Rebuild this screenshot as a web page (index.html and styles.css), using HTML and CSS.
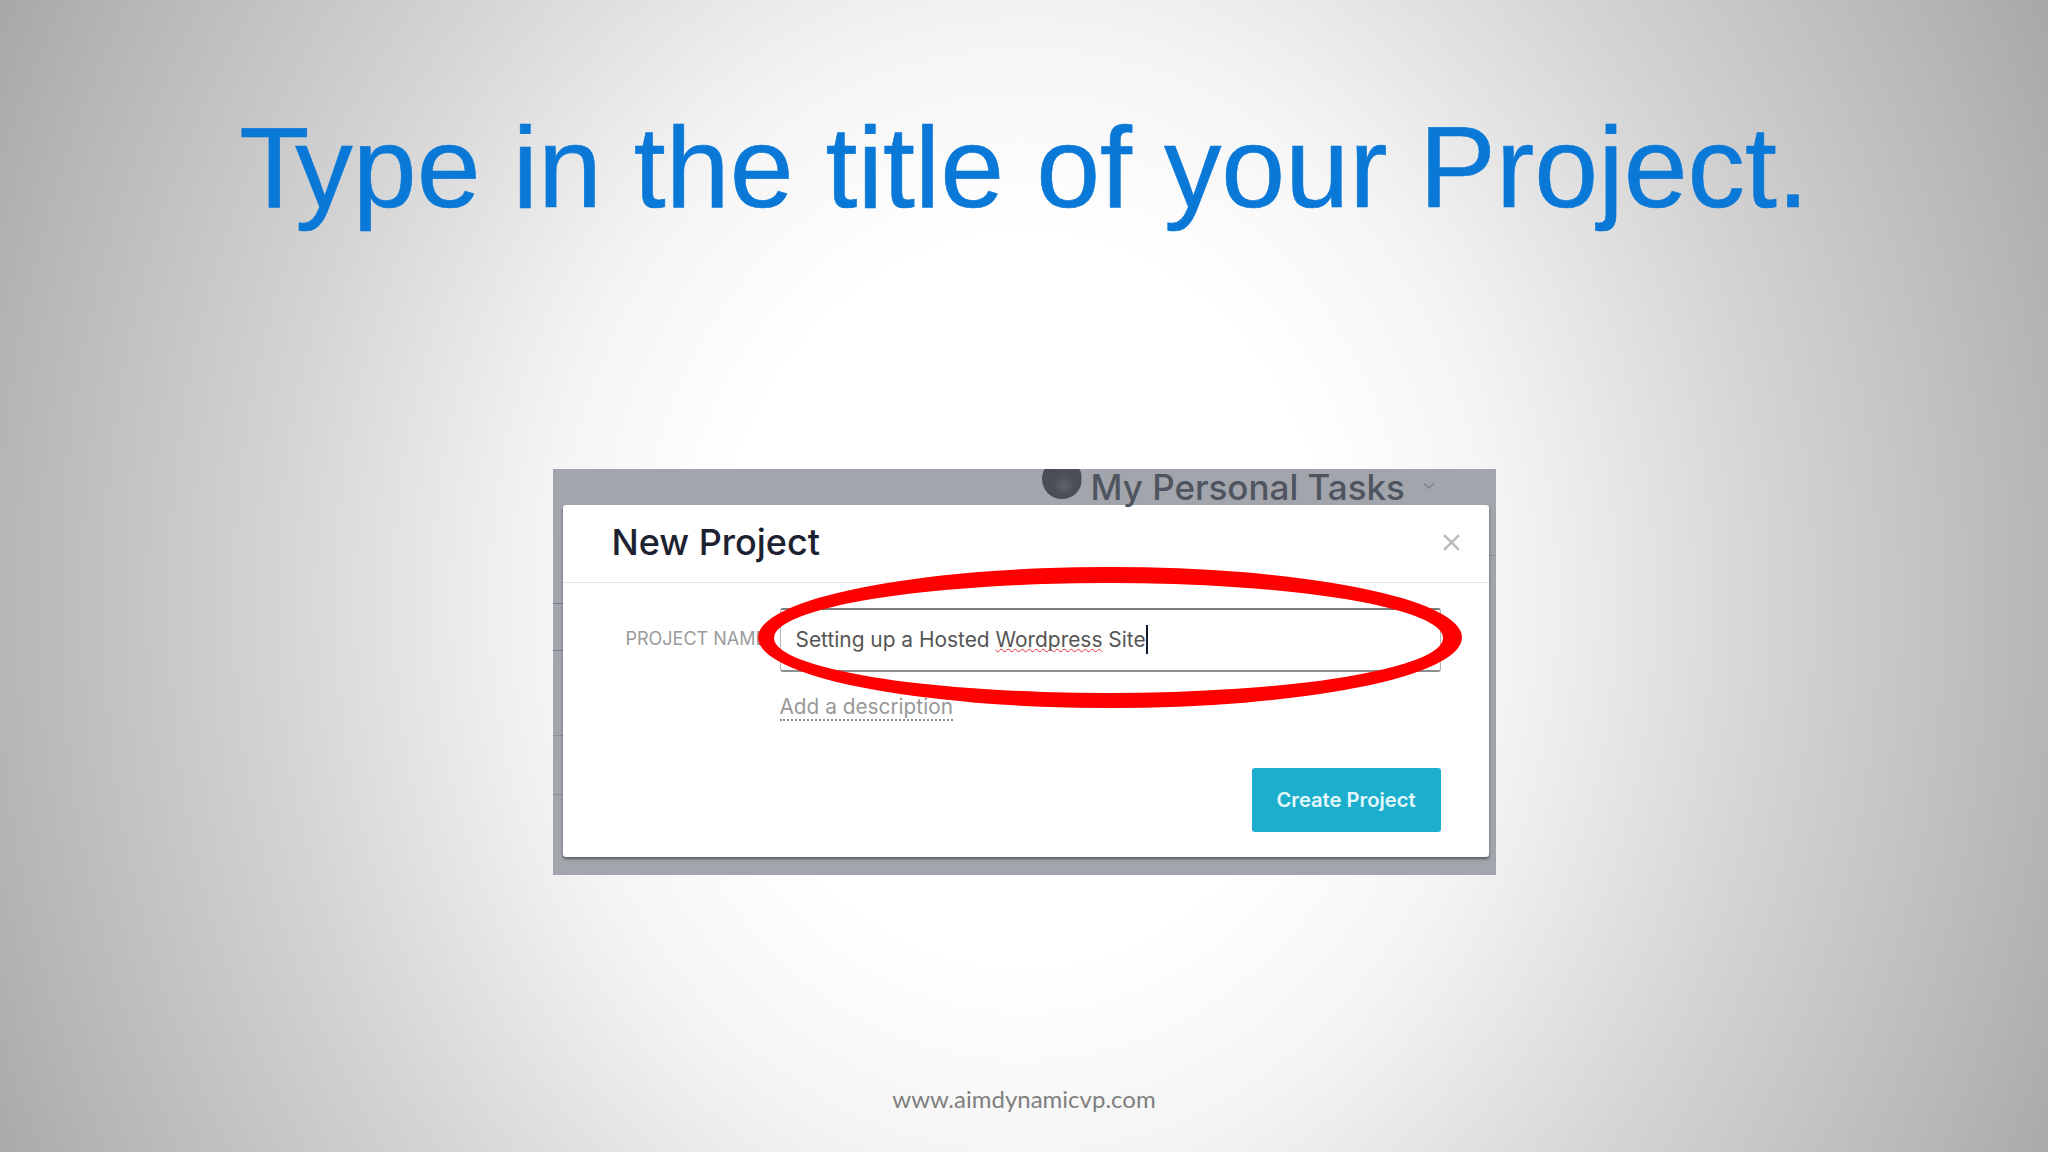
FILE: index.html
```html
<!DOCTYPE html>
<html lang="en">
<head>
    <meta charset="UTF-8">
    <title>Type in the title of your Project.</title>
    <link rel="stylesheet" href="styles.css">
</head>
<body>
    <main class="slide">
        <h1 class="slide-title"><span class="kern-t">T</span>ype in the title of your Project.</h1>

        <div class="capture">
            <div class="capture-top">
                <span class="avatar"></span>
                <span class="workspace">My Personal Tasks</span>
                <svg class="chevron" viewBox="0 0 12 8" width="12" height="8">
                    <path d="M1 1.5 L6 6 L11 1.5" fill="none" stroke="#7d8189" stroke-width="1.4"/>
                </svg>
            </div>

            <div class="dialog">
                <div class="dialog-head">
                    <h2>New Project</h2>
                    <svg class="close" viewBox="0 0 16 16" width="17" height="17">
                        <path d="M1 1 L15 15 M15 1 L1 15" fill="none" stroke="#b9b9b9" stroke-width="2.2"/>
                    </svg>
                </div>
                <div class="dialog-body">
                    <div class="field">
                        <label class="field-label">PROJECT NAME</label>
                        <div class="field-input">
                            <span>Setting up a Hosted <span class="misspelt">Wordpress</span> Site</span><span class="caret"></span>
                        </div>
                    </div>
                    <a class="add-description" href="#">Add a description</a>
                    <div class="dialog-actions">
                        <a class="btn" href="#">Create Project</a>
                    </div>
                </div>
            </div>

            <!-- red marker round the input -->
            <svg class="marker" viewBox="0 0 704 141" width="704" height="141">
                <path fill="#fe0000" fill-rule="evenodd" d="M0 70.5 A352 70.5 0 1 0 704 70.5 A352 70.5 0 1 0 0 70.5 Z M16 71 A334.5 55 0 1 1 685 71 A334.5 55 0 1 1 16 71 Z"/>
            </svg>
        </div>

        <footer class="slide-footer">www.aimdynamicvp.com</footer>
    </main>
</body>
</html>
```

FILE: styles.css
```css
* {
    margin: 0;
    padding: 0;
    box-sizing: border-box;
}

body {
    width: 2048px;
    height: 1152px;
    overflow: hidden;
    font-family: Inter, 'Liberation Sans', sans-serif;
}

.slide {
    width: 2048px;
    height: 1152px;
    display: flex;
    flex-direction: column;
    align-items: center;
    background: radial-gradient(ellipse 1100px 1300px at 50% 600px, #fff 0%, #fff 28%, #f5f5f5 43%, #efefef 48%, #d4d4d4 68%, #b6b6b6 93%, #a6a6a6 105%);
}

.slide-title {
    margin-top: 100px;
    font-family: 'Liberation Sans', Arial, sans-serif;
    font-size: 114.9px;
    font-weight: 400;
    line-height: 134px;
    color: #0a78d7;
    white-space: nowrap;
    -webkit-text-stroke: 0.6px #0a78d7;
}

.kern-t {
    letter-spacing: -14px;
}

.capture {
    position: relative;
    width: 943px;
    height: 406px;
    margin-top: 235px;
    padding: 0 7px 0 10px;
    background-color: #a2a5ab;
    /* table rows of the page behind the dialog */
    background-image:
        linear-gradient(#6f8295, #6f8295),
        linear-gradient(#6f8295, #6f8295),
        linear-gradient(#8c9095, #8c9095),
        linear-gradient(#8c9095, #8c9095),
        linear-gradient(#8c9095, #8c9095);
    background-size: 10px 1px, 10px 1px, 10px 1px, 10px 1px, 7px 1px;
    background-position: 0 134px, 0 181px, 0 266px, 0 325px, 100% 86px;
    background-repeat: no-repeat;
}

.capture-top {
    height: 36px;
    display: flex;
    align-items: flex-start;
    padding-left: 479px;
    color: #4f5560;
}

.avatar {
    width: 40px;
    height: 40px;
    margin-top: -10px;
    border-radius: 50%;
    background: radial-gradient(circle at 55% 65%, #5f636b 0%, #4a4f58 30%, #454a54 100%);
    clip-path: inset(10px 0 0 0);
    flex-shrink: 0;
}

.workspace {
    margin-left: 9px;
    font-size: 35px;
    font-weight: 500;
    line-height: 36px;
    white-space: nowrap;
}

.chevron {
    margin: 13px 0 0 18px;
}

.dialog {
    height: 352px;
    background: #fff;
    border-radius: 3px;
    box-shadow: 0 2px 3px rgba(0,0,0,0.45);
}

.dialog-head {
    height: 78px;
    display: flex;
    align-items: center;
    justify-content: space-between;
    padding: 0 29px 3px 49px;
    border-bottom: 1px solid #e4e6e8;
}

.dialog-head h2 {
    font-size: 36px;
    font-weight: 500;
    color: #1d2230;
}

.dialog-body {
    padding: 25px 48px 0 0;
}

.field {
    display: flex;
    align-items: center;
}

.field-label {
    width: 217px;
    padding: 0 0 3px 63px;
    font-size: 18px;
    color: #9b9b9b;
    white-space: nowrap;
    overflow: hidden;
}

.field-input {
    flex: 1;
    height: 64px;
    display: flex;
    align-items: center;
    padding: 0 0 1px 15px;
    font-size: 20.9px;
    color: #555;
    border: 1px solid #b5b5b5;
    border-top: 2px solid #7b7b7b;
    border-bottom: 2px solid #8e8e8e;
    border-radius: 3px;
}

.misspelt {
    text-decoration: underline wavy #e03030 1px;
    text-decoration-skip-ink: none;
}

.caret {
    width: 2px;
    height: 29px;
    background: #101a33;
}

.add-description {
    display: table;
    margin: 22px 0 0 217px;
    font-size: 20.8px;
    color: #989898;
    text-decoration: none;
    border-bottom: 2px dotted #8d8d8d;
}

.dialog-actions {
    display: flex;
    justify-content: flex-end;
    margin-top: 47px;
}

.btn {
    width: 189px;
    height: 64px;
    display: flex;
    align-items: center;
    justify-content: center;
    padding-bottom: 2px;
    font-size: 20.2px;
    font-weight: 600;
    color: #e4f7fb;
    text-decoration: none;
    background: #1cafcd;
    border-radius: 3px;
}

.marker {
    position: absolute;
    left: 205px;
    top: 98px;
}

.slide-footer {
    margin-top: 209px;
    font-family: Lato, 'Liberation Sans', sans-serif;
    font-size: 24px;
    color: #7f7f7f;
}
```
